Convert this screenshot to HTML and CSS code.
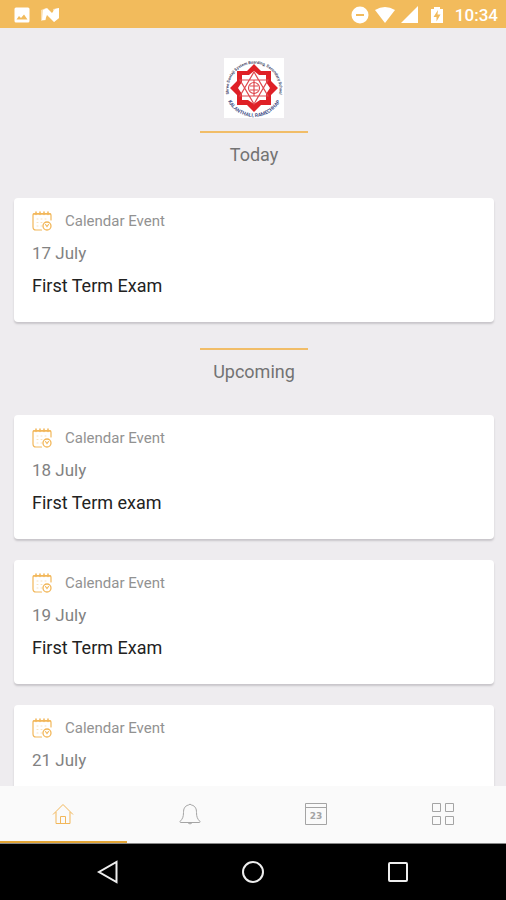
FILE: index.html
```html
<!DOCTYPE html>
<html lang="en">
<head>
<meta charset="utf-8">
<meta name="viewport" content="width=device-width, initial-scale=1">
<title>School Events</title>
<link rel="stylesheet" href="styles.css">
</head>
<body>
<svg class="defs" aria-hidden="true">
  <symbol id="event" viewBox="0 0 20 20">
    <g fill="none" stroke="currentColor" stroke-linecap="round">
      <path stroke-width="1.2" d="M9.500 19H4Q1 19 1 16V4.500Q1 2.500 3 2.500H17Q19 2.500 19 4.500V9"/>
      <path stroke-width="1.500" d="M4 1V3.500M8 1V3.500M12 1V3.500M16 1V3.500M1.500 3H18.500"/>
      <path stroke-width="1" opacity=".4" stroke-dasharray="1 3" d="M5 8H16M5 11.500H12M5 15H10"/>
      <circle cx="15" cy="15" r="4" stroke-width="1.300"/>
      <path stroke-width="1.100" d="M13.500 13.500L15 15.500L16.500 13.500"/>
    </g>
  </symbol>
</svg>
<div class="app">
  <header class="status">
    <div class="status-group">
      <svg class="status-icon" viewBox="0 0 18 18"><path fill="#fff" fill-rule="evenodd" d="M3 1.500H15Q16.500 1.500 16.500 3V15Q16.500 16.500 15 16.500H3Q1.500 16.500 1.500 15V3Q1.500 1.500 3 1.500ZM3.500 13.500H14.500L11 8.500L8 12L6 10Z"/></svg>
      <svg class="status-icon" viewBox="0 0 18 18"><path fill="#fff" opacity=".5" d="M0 4L5 2V14L0 15ZM12 3L18 2V12L13 16Z"/><path fill="#fff" d="M2 4L6 2L11 7L14 3L18 2V12L13 16L6 9L4 14L1 14Z"/></svg>
    </div>
    <div class="status-group status-right">
      <svg class="status-icon" viewBox="0 0 18 18"><circle cx="9" cy="9" r="8.500" fill="#fff"/><path stroke="#f2bb5c" stroke-width="2" d="M5 9H13"/></svg>
      <svg class="status-icon signal" viewBox="0 0 22 18"><path fill="#fff" d="M1 4Q11-2 21 4L11 17Z"/></svg>
      <svg class="status-icon" viewBox="0 0 18 18"><path fill="#fff" d="M17 0V17H0Z"/></svg>
      <svg class="status-icon battery" viewBox="0 0 18 18"><path fill="#fff" d="M6 1H12V3H15V17H3V3H6Z"/><path fill="#f2bb5c" d="M10 4L5.500 11H8.500V15.500L12.500 8.500H9.500Z"/></svg>
      <time class="clock">10:34</time>
    </div>
  </header>

  <main class="feed">
    <svg class="crest" viewBox="0 0 60 60" role="img" aria-label="School crest">
      <rect width="60" height="60" fill="#fff"/>
      <path fill="#df2026" d="M30 6L37 13H47V23L54 30L47 37V47H37L30 54L23 47H13V37L6 30L13 23V13H23Z"/>
      <path fill="#fff" d="M30 13L35 17H42V24L46 30L42 36V42H36L30 46L24 42H18V36L14 30L18 24V17H25Z"/>
      <g fill="none" stroke="#df4a50" stroke-width="1.200">
        <path d="M30 14L44 38H16ZM30 46L44 22H16Z"/>
        <circle cx="30" cy="30" r="5.500"/>
        <path d="M30 22V38M26 28H34M26 32H34"/>
      </g>
      <path id="arc-top" fill="none" d="M6.500 41A25.500 25.500 0 1 1 53.500 41"/>
      <path id="arc-bottom" fill="none" d="M1.500 37A29.500 29.500 0 0 0 58.500 37"/>
      <text class="crest-text"><textPath href="#arc-top" startOffset="50%" text-anchor="middle">Shree Santaji System Boarding, Secondary School</textPath></text>
      <text class="crest-text crest-place"><textPath href="#arc-bottom" startOffset="50%" text-anchor="middle">KALANTHALI, RAMECHHAP</textPath></text>
    </svg>

    <section class="group">
      <h2 class="group-title">Today</h2>
      <article class="card">
        <p class="kind"><svg class="kind-icon"><use href="#event"/></svg>Calendar Event</p>
        <p class="date">17 July</p>
        <h3 class="title">First Term Exam</h3>
      </article>
    </section>

    <section class="group">
      <h2 class="group-title">Upcoming</h2>
      <article class="card">
        <p class="kind"><svg class="kind-icon"><use href="#event"/></svg>Calendar Event</p>
        <p class="date">18 July</p>
        <h3 class="title">First Term exam</h3>
      </article>
      <article class="card">
        <p class="kind"><svg class="kind-icon"><use href="#event"/></svg>Calendar Event</p>
        <p class="date">19 July</p>
        <h3 class="title">First Term Exam</h3>
      </article>
      <article class="card">
        <p class="kind"><svg class="kind-icon"><use href="#event"/></svg>Calendar Event</p>
        <p class="date">21 July</p>
      </article>
    </section>
  </main>

  <nav class="tabs">
    <a class="tab tab-active" href="#home" aria-label="Home"><svg class="tab-icon" viewBox="0 0 22 22"><path d="M1 11.500L11 1.500L21 11.500M4 9V20.500H18V9M8.500 20.500V13.500H13.500V20.500"/></svg></a>
    <a class="tab" href="#alerts" aria-label="Notifications"><svg class="tab-icon" viewBox="0 0 22 22"><path d="M9.500 2Q11 .3 12.500 2M9.500 2C5.500 3 4.500 6 4.500 9.500C4.500 14 3.500 16 1 18.500Q.8 19.500 2 19.500H20Q21.200 19.500 21 18.500C18.500 16 17.500 14 17.500 9.500C17.500 6 16.500 3 12.500 2M8.500 19.500Q11 22.500 13.500 19.500"/></svg></a>
    <a class="tab" href="#calendar" aria-label="Calendar"><svg class="tab-icon" viewBox="0 0 22 22"><path d="M.5 .5H21.500V21.500H.5ZM.5 4.500H21.500"/><text class="tab-day" x="11" y="16" text-anchor="middle">23</text></svg></a>
    <a class="tab" href="#more" aria-label="More"><svg class="tab-icon" viewBox="0 0 22 22"><path d="M.5 .5H8.500V8.500H.5ZM13.500 .5H21.500V8.500H13.500ZM.5 13.500H8.500V21.500H.5ZM13.500 13.500H21.500V21.500H13.500Z"/></svg></a>
  </nav>

  <footer class="system">
    <button class="key" type="button" aria-label="Back"><svg class="key-icon" viewBox="0 0 24 24"><path d="M20.500 2V22L3 12Z"/></svg></button>
    <button class="key" type="button" aria-label="Home"><svg class="key-icon" viewBox="0 0 24 24"><circle cx="12" cy="12" r="10"/></svg></button>
    <button class="key" type="button" aria-label="Recent apps"><svg class="key-icon" viewBox="0 0 24 24"><rect x="3" y="3" width="18" height="18" rx="1"/></svg></button>
  </footer>
</div>
</body>
</html>
```
FILE: styles.css
```css
* { box-sizing: border-box; }

body {
  margin: 0;
  background: #eeecef;
  font-family: Roboto, "Liberation Sans", sans-serif;
}

h2, h3, p { margin: 0; font-weight: 400; }

.defs { display: none; }

.app {
  display: flex;
  flex-direction: column;
  height: 100vh;
}

.status {
  display: flex;
  flex: none;
  justify-content: space-between;
  align-items: center;
  height: 28px;
  padding: 2px 8px 0 13px;
  background: #f2bb5c;
  color: #fff;
}

.status-group { display: flex; align-items: center; gap: 10px; }
.status-right { gap: 5px; }
.status-icon { width: 18px; height: 18px; }
.signal { width: 22px; }
.battery { margin: 0 4px; }
.clock { font-size: 17px; font-weight: 500; line-height: 24px; }

.feed {
  flex: 1;
  min-height: 0;
  overflow: hidden;
  padding: 30px 12px 0 14px;
}

.crest { display: block; width: 60px; height: 60px; margin: 0 auto 13px; }
.crest-text { font-size: 4px; font-weight: 700; fill: #3f4568; }
.crest-place { font-size: 5px; fill: #3f5088; }

.group {
  display: flex;
  flex-direction: column;
  gap: 21px;
  margin-bottom: 26px;
}

.group-title {
  align-self: center;
  width: 108px;
  height: 46px;
  padding-top: 10px;
  border-top: 2px solid #f1bd68;
  color: #737373;
  font-size: 18px;
  line-height: 24px;
  text-align: center;
}

.card {
  min-height: 124px;
  padding: 11px 18px;
  border-radius: 4px;
  background: #fff;
  box-shadow: 0 2px 2px #c8c6ca;
}

.kind {
  display: flex;
  align-items: center;
  gap: 13px;
  color: #929292;
  font-size: 15px;
  line-height: 24px;
}

.kind-icon { width: 20px; height: 20px; color: #f2b75a; }

.date {
  margin-top: 8px;
  color: #828282;
  font-size: 17px;
  line-height: 24px;
}

.title {
  margin-top: 9px;
  color: #222;
  font-size: 18px;
  line-height: 24px;
}

.tabs {
  display: grid;
  flex: none;
  grid-template-columns: repeat(4, 1fr);
  height: 58px;
  background: #fafafa;
  border-bottom: 1px solid #888;
}

.tab {
  display: grid;
  place-items: center;
  border-bottom: 2px solid transparent;
  color: #a4a4a4;
}

.tab-active { border-color: #e3a536; color: #f2b75a; }

.tab-icon {
  width: 22px;
  height: 22px;
  fill: none;
  stroke: currentColor;
  stroke-width: 1;
}

.tab-day {
  fill: currentColor;
  stroke: none;
  font-family: "DejaVu Sans", sans-serif;
  font-size: 9px;
  font-weight: 700;
}

.system {
  display: flex;
  flex: none;
  justify-content: center;
  gap: 97px;
  height: 56px;
  background: #000;
}

.key {
  display: grid;
  place-items: center;
  width: 48px;
  padding: 0;
  border: 0;
  background: none;
}

.key-icon {
  width: 24px;
  height: 24px;
  fill: none;
  stroke: #eee;
  stroke-width: 2;
}
```
